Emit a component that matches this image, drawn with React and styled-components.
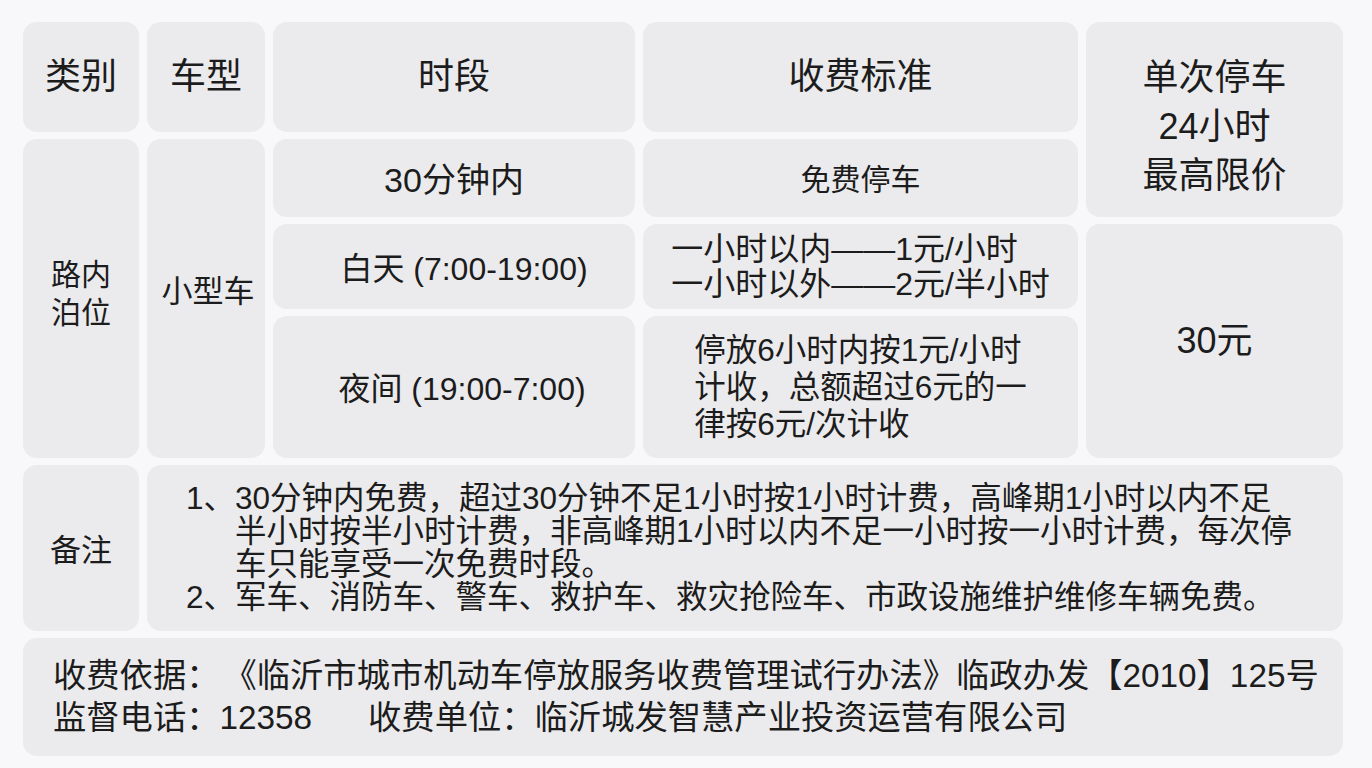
import React from "react";
import styled, { createGlobalStyle } from "styled-components";

const GlobalStyle = createGlobalStyle`
  html, body {
    margin: 0;
    padding: 0;
    background: #f8f8fa;
  }
  body {
    font-family: "Liberation Sans", "Noto Sans CJK SC", "Noto Sans", sans-serif;
    color: #1c1c1c;
  }
`;

const Page = styled.div`
  padding: 22px 29px 12px 23px;
`;

const Board = styled.div`
  display: grid;
  grid-template-columns: 116px 118px 362px 435px 257px;
  grid-template-rows: 110px 78px 85px 142px 166px 118px;
  column-gap: 8px;
  row-gap: 7px;
`;

const Cell = styled.div`
  grid-column: ${(p) => p.$col};
  grid-row: ${(p) => p.$row};
  background: #ebebed;
  border-radius: 14px;
  display: flex;
  align-items: center;
  justify-content: center;
  text-align: center;
  font-size: ${(p) => p.$size || 32}px;
  line-height: ${(p) => p.$lh || 1.2};
  padding: ${(p) => p.$pad || "0"};
  box-sizing: border-box;
  white-space: nowrap;
`;

const HeadCell = styled(Cell)`
  font-size: 36px;
`;

const RateText = styled.div`
  display: inline-block;
  text-align: left;
  font-size: ${(p) => p.$size}px;
  line-height: ${(p) => p.$lh}px;
`;

const Remarks = styled(Cell)`
  justify-content: flex-start;
  text-align: left;
  padding-left: 39px;
  font-size: 31.5px;
  line-height: 33px;
`;

const RemarkList = styled.div`
  display: flex;
  flex-direction: column;
`;

const RemarkItem = styled.div`
  display: flex;
`;

const RemarkNum = styled.span`
  flex: none;
`;

const Footer = styled(Cell)`
  justify-content: flex-start;
  text-align: left;
  padding-left: 30px;
  font-size: 33.3px;
  line-height: 42px;
`;

const FooterLines = styled.div`
  display: flex;
  flex-direction: column;
`;

const Spacer = styled.span`
  display: inline-block;
  width: ${(p) => p.$w}px;
`;

export default function App() {
  return (
    <>
      <GlobalStyle />
      <Page>
        <Board>
          <HeadCell $col="1" $row="1">类别</HeadCell>
          <HeadCell $col="2" $row="1">车型</HeadCell>
          <HeadCell $col="3" $row="1">时段</HeadCell>
          <HeadCell $col="4" $row="1">收费标准</HeadCell>
          <HeadCell $col="5" $row="1 / 3" $lh="49px" $pad="14px 0 0 0">
            <div>
              单次停车
              <br />
              24小时
              <br />
              最高限价
            </div>
          </HeadCell>

          <Cell $col="1" $row="2 / 5" $size={30} $lh="38px" $pad="0 0 10px 0">
            <div>
              路内
              <br />
              泊位
            </div>
          </Cell>
          <Cell $col="2" $row="2 / 5" $size={31} $pad="0 0 14px 4px">
            小型车
          </Cell>

          <Cell $col="3" $row="2" $size={34} $pad="4px 0 0 0">
            30分钟内
          </Cell>
          <Cell $col="4" $row="2" $size={30} $pad="4px 0 0 0">
            免费停车
          </Cell>

          <Cell $col="3" $row="3" $size={32} $pad="6px 0 0 20px">
            白天 (7:00-19:00)
          </Cell>
          <Cell $col="4" $row="3">
            <RateText $size={32} $lh={35}>
              一小时以内——1元/小时
              <br />
              一小时以外——2元/半小时
            </RateText>
          </Cell>

          <Cell $col="3" $row="4" $size={32} $pad="4px 0 0 16px">
            夜间 (19:00-7:00)
          </Cell>
          <Cell $col="4" $row="4">
            <RateText $size={31.5} $lh={37}>
              停放6小时内按1元/小时
              <br />
              计收，总额超过6元的一
              <br />
              律按6元/次计收
            </RateText>
          </Cell>

          <Cell $col="5" $row="3 / 5" $size={36}>
            30元
          </Cell>

          <Cell $col="1" $row="5" $size={31} $pad="6px 0 0 0">
            备注
          </Cell>
          <Remarks $col="2 / 6" $row="5">
            <RemarkList>
              <RemarkItem>
                <RemarkNum>1、</RemarkNum>
                <span>
                  30分钟内免费，超过30分钟不足1小时按1小时计费，高峰期1小时以内不足
                  <br />
                  半小时按半小时计费，非高峰期1小时以内不足一小时按一小时计费，每次停
                  <br />
                  车只能享受一次免费时段。
                </span>
              </RemarkItem>
              <RemarkItem>
                <RemarkNum>2、</RemarkNum>
                <span>军车、消防车、警车、救护车、救灾抢险车、市政设施维护维修车辆免费。</span>
              </RemarkItem>
            </RemarkList>
          </Remarks>

          <Footer $col="1 / 6" $row="6">
            <FooterLines>
              <div>
                收费依据：
                <Spacer $w={4} />
                《临沂市城市机动车停放服务收费管理试行办法》临政办发【2010】125号
              </div>
              <div>
                监督电话：12358
                <Spacer $w={56} />
                收费单位：临沂城发智慧产业投资运营有限公司
              </div>
            </FooterLines>
          </Footer>
        </Board>
      </Page>
    </>
  );
}
